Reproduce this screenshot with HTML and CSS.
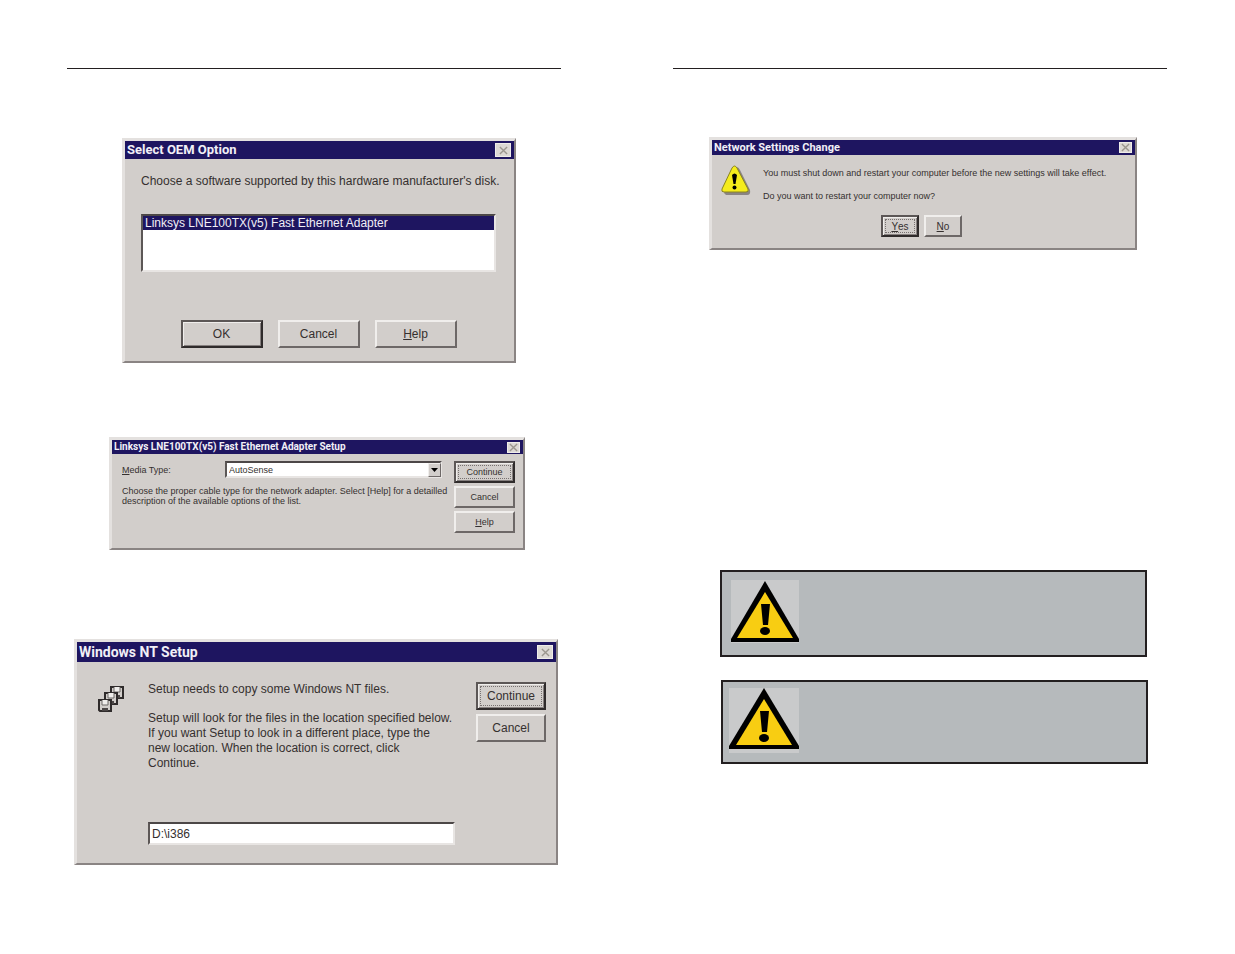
FILE: index.html
```html
<!DOCTYPE html>
<html lang="en">
<head>
<meta charset="utf-8">
<title>Installing the adapter under Windows NT</title>
<link rel="stylesheet" href="styles.css">
</head>
<body>
<div class="spread">

<div class="page">
	<form class="window oem">
		<div class="titlebar">
			<h2>Select OEM Option</h2>
			<button type="button" class="close" aria-label="Close"><svg viewBox="0 0 10 10"><path d="M1 1L9 9M9 1L1 9"/></svg></button>
		</div>
		<div class="content">
			<label for="software">Choose a software supported by this hardware manufacturer's disk.</label>
			<select id="software" class="list" size="4">
				<option selected>Linksys LNE100TX(v5) Fast Ethernet Adapter</option>
			</select>
			<div class="buttons">
				<button type="button" class="default">OK</button>
				<button type="button">Cancel</button>
				<button type="button"><u>H</u>elp</button>
			</div>
		</div>
	</form>

	<form class="window adapter">
		<div class="titlebar">
			<h2>Linksys LNE100TX(v5) Fast Ethernet Adapter Setup</h2>
			<button type="button" class="close" aria-label="Close"><svg viewBox="0 0 10 10"><path d="M1 1L9 9M9 1L1 9"/></svg></button>
		</div>
		<div class="content">
			<div class="main">
				<div class="field">
					<label for="media"><u>M</u>edia Type:</label>
					<div class="combo">
						<select id="media"><option>AutoSense</option></select>
						<span class="arrow"><svg viewBox="0 0 7 4"><path d="M0 0H7L3.5 4Z"/></svg></span>
					</div>
				</div>
				<p>Choose the proper cable type for the network adapter. Select [Help] for a detailled<br>description of the available options of the list.</p>
			</div>
			<div class="buttons">
				<button type="button" class="default"><span class="focus">Continue</span></button>
				<button type="button">Cancel</button>
				<button type="button"><u>H</u>elp</button>
			</div>
		</div>
	</form>

	<form class="window setup">
		<div class="titlebar">
			<h2>Windows NT Setup</h2>
			<button type="button" class="close" aria-label="Close"><svg viewBox="0 0 10 10"><path d="M1 1L9 9M9 1L1 9"/></svg></button>
		</div>
		<div class="content">
			<svg class="disks" viewBox="0 0 26 26">
				<g id="disk">
					<path class="case" d="M13 1H25V12H14L13 11Z"/>
					<path class="slot" d="M16 1V6H22V1"/>
					<path class="hub" d="M16 9H22V12H16Z"/>
				</g>
				<use href="#disk" x="-6" y="6"/>
				<use href="#disk" x="-12" y="13"/>
			</svg>
			<div class="main">
				<p>Setup needs to copy some Windows NT files.</p>
				<p><label for="path">Setup will look for the files in the location specified below. If you want Setup to look in a different place, type the new location. When the location is correct, click<br>Continue.</label></p>
				<input id="path" type="text" value="D:\i386">
			</div>
			<div class="buttons">
				<button type="button" class="default"><span class="focus">Continue</span></button>
				<button type="button">Cancel</button>
			</div>
		</div>
	</form>
</div>

<div class="page">
	<form class="window restart">
		<div class="titlebar">
			<h2>Network Settings Change</h2>
			<button type="button" class="close" aria-label="Close"><svg viewBox="0 0 10 10"><path d="M1 1L9 9M9 1L1 9"/></svg></button>
		</div>
		<div class="content">
			<div class="message">
				<svg class="alert" viewBox="0 0 30 30">
					<path class="shadow" d="M15 3Q17 1 19 5L29 25Q30 30 26 30H5L3 28Z"/>
					<path class="sign" d="M11 3Q13.500 -1 16 3L27 24Q28 27 25 27H3Q0 27 1 24Z"/>
					<path d="M11 10Q13.500 7 16 10L14.500 19H12.500Z"/>
					<circle cx="13.500" cy="22.500" r="2"/>
				</svg>
				<div>
					<p>You must shut down and restart your computer before the new settings will take effect.</p>
					<p>Do you want to restart your computer now?</p>
				</div>
			</div>
			<div class="buttons">
				<button type="button" class="default"><span class="focus"><u>Y</u>es</span></button>
				<button type="button"><u>N</u>o</button>
			</div>
		</div>
	</form>

	<div class="note first">
		<svg class="warning" viewBox="0 0 68 63">
			<path d="M34 1L68 59V62H0V59Z"/>
			<path class="yellow" d="M34 12L62 58H6Z"/>
			<path d="M30 24H39L37 45H32Z"/>
			<ellipse cx="34" cy="51" rx="5" ry="4"/>
		</svg>
	</div>
	<div class="note second">
		<svg class="warning" viewBox="0 0 70 65">
			<path d="M35 0L70 58V61H0V58Z"/>
			<path class="yellow" d="M35 11L63 57H7Z"/>
			<path d="M31 23H40L38 44H33Z"/>
			<ellipse cx="35" cy="50" rx="5" ry="4"/>
		</svg>
	</div>
</div>

</div>
</body>
</html>
```

FILE: styles.css
```css
*{
box-sizing:border-box;
}
body{
margin:0;
background:#fff;
color:#35302f;
font-family:"Liberation Sans",Arial,sans-serif;
font-size:12px;
}
h2,p{
margin:0;
}
.spread{
display:grid;
grid-template-columns:1fr 1fr;
gap:112px;
padding:68px 68px 88px 67px;
}
.page{
border-top:1px solid #231f20;
min-width:0;
}

/* windows */
.window{
max-width:100%;
background:#d2cecb;
border:1px solid #e4e1df;
border-width:3px 2px 2px 3px;
border-right-color:#8a8483;
border-bottom-color:#8a8483;
}
.titlebar{
display:flex;
align-items:center;
justify-content:space-between;
padding:0 3px 0 2px;
background:#1e1560;
color:#f1eff6;
}
.titlebar h2{
font-family:Roboto,Arial,sans-serif;
font-size:13px;
line-height:18px;
white-space:nowrap;
}
.close{
display:flex;
align-items:center;
justify-content:center;
width:16px;
height:14px;
padding:0;
background:#dcd8d4;
border:1px solid #eeece9;
}
.close svg{
width:9px;
height:9px;
stroke:#9b968e;
stroke-width:1.5;
}
button{
font-family:inherit;
color:inherit;
}
.buttons{
display:flex;
}
.buttons button{
padding:0;
background:#d2cecb;
border:2px solid #f0eeec;
border-right-color:#6d6867;
border-bottom-color:#6d6867;
font-size:12px;
}
.buttons .default{
border-color:#5c5756 #2f2b2b #2f2b2b #5c5756;
box-shadow:inset 1px 1px #f0eeec,inset -1px -1px #86807f;
}
.buttons .default:has(.focus){
padding:2px;
}
.focus{
display:flex;
align-items:center;
justify-content:center;
height:100%;
border:1px dotted #777170;
}
.focus u,.buttons u{
text-underline-offset:1px;
}

/* Select OEM Option */
.oem{
width:394px;
margin:69px 0 0 55px;
}
.oem .content{
padding:14px 18px 13px 16px;
}
.oem label{
display:block;
line-height:16px;
white-space:nowrap;
}
.list{
display:block;
width:100%;
height:58px;
margin:25px 0 48px;
padding:0;
overflow:hidden;
background:#fff;
border:2px solid #e8e5e3;
border-top-color:#4c4747;
border-left-color:#5c5756;
border-radius:0;
outline:none;
font-family:inherit;
font-size:12px;
}
.list option{
min-height:0;
padding:0 2px;
line-height:14px;
}
.list option:checked{
background:linear-gradient(#1e1560,#1e1560);
-webkit-text-fill-color:#f1eff6;
}
.oem .buttons{
justify-content:center;
gap:15px;
}
.oem .buttons button{
width:82px;
height:28px;
}

/* Adapter Setup */
.adapter{
width:416px;
margin:74px 0 0 42px;
font-size:9px;
}
.adapter h2{
font-size:10px;
line-height:14px;
}
.adapter .close,.restart .close{
width:13px;
height:11px;
}
.adapter .content{
display:flex;
justify-content:space-between;
padding:7px 8px 15px 10px;
}
.adapter .main{
width:320px;
}
.adapter .field{
display:flex;
align-items:center;
justify-content:space-between;
margin-bottom:8px;
}
.combo{
display:flex;
width:217px;
height:17px;
position:relative;
}
.combo select{
appearance:none;
width:100%;
padding:0 2px;
background:#fff;
border:2px solid #e8e5e3;
border-top-color:#4c4747;
border-left-color:#5c5756;
border-radius:0;
color:inherit;
font-family:inherit;
font-size:9px;
}
.arrow{
position:absolute;
top:2px;
right:1px;
bottom:1px;
width:13px;
display:flex;
align-items:center;
justify-content:center;
background:#d2cecb;
border:1px solid #f0eeec;
border-right-color:#6d6867;
border-bottom-color:#6d6867;
pointer-events:none;
}
.arrow svg{
width:7px;
height:4px;
}
.adapter p{
line-height:10px;
white-space:nowrap;
}
.adapter .buttons{
flex-direction:column;
gap:3px;
}
.adapter .buttons button{
width:61px;
height:22px;
font-size:9px;
}

/* Windows NT Setup */
.setup{
width:484px;
margin:89px 0 0 7px;
}
.setup h2{
font-size:14px;
line-height:20px;
}
.setup .content{
display:flex;
align-items:flex-start;
padding:20px 10px 18px 21px;
}
.disks{
width:26px;
height:26px;
margin:4px 24px 0 0;
}
.disks .case{
fill:#d2cecb;
stroke:#2f2b2b;
stroke-width:2;
}
.disks .slot{
fill:#f0eeec;
stroke:#6d6867;
}
.disks .hub{
fill:#4c4747;
}
.setup .main{
width:307px;
}
.setup p{
margin-bottom:14px;
line-height:15px;
}
.setup input{
display:block;
width:100%;
height:23px;
margin-top:51px;
padding:0 2px;
background:#fff;
border:2px solid #e8e5e3;
border-top-color:#4c4747;
border-left-color:#5c5756;
color:inherit;
font-family:inherit;
font-size:12px;
}
.setup .buttons{
flex-direction:column;
gap:4px;
margin-left:auto;
}
.setup .buttons button{
width:70px;
height:28px;
}

/* Network Settings Change */
.restart{
width:428px;
margin:68px 0 0 36px;
font-size:9px;
}
.restart h2{
font-size:11px;
line-height:15px;
}
.restart .content{
padding:10px 9px 11px;
}
.message{
display:flex;
gap:12px;
}
.message p{
margin-bottom:7px;
line-height:16px;
white-space:nowrap;
}
.alert{
flex:none;
width:30px;
height:30px;
}
.alert .shadow{
fill:#8a8483;
}
.alert .sign{
fill:#f5ec1c;
stroke:#8a8420;
}
.restart .buttons{
justify-content:center;
gap:5px;
padding:4px 4px 0 0;
}
.restart .buttons button{
width:38px;
height:22px;
font-size:10px;
}

/* gray note boxes */
.note{
width:427px;
max-width:100%;
background:#b6babc;
border:2px solid #231f20;
}
.note.first{
margin:320px 0 0 47px;
padding:8px 9px 12px;
}
.note.second{
margin:23px 0 0 48px;
padding:6px 6px 9px;
}
.warning{
display:block;
width:68px;
height:63px;
background:#c9cacb;
}
.second .warning{
width:70px;
height:65px;
}
.warning .yellow{
fill:#f8cd12;
}
```
